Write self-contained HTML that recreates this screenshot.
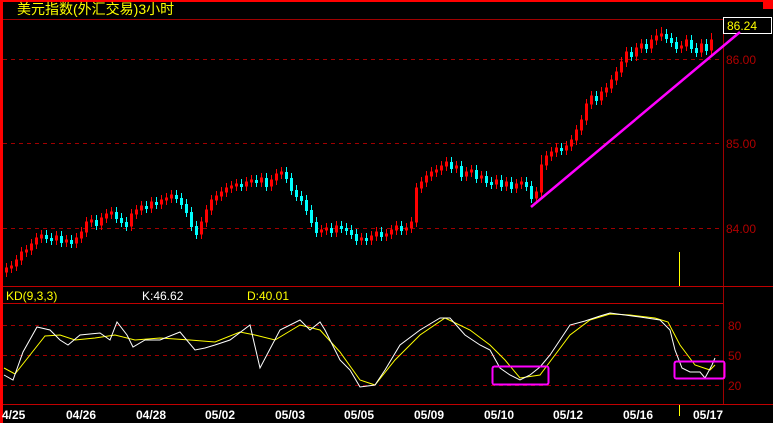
<!DOCTYPE html>
<html><head><meta charset="utf-8"><style>
html,body{margin:0;padding:0;background:#000;width:773px;height:423px;overflow:hidden}
svg{display:block}
text{font-family:"Liberation Sans","Noto Sans CJK SC",sans-serif}
</style></head><body>
<svg width="773" height="423" xmlns="http://www.w3.org/2000/svg" shape-rendering="crispEdges">
<rect width="773" height="423" fill="#000"/>
<rect x="0" y="0" width="773" height="2" fill="#f00"/>
<rect x="763" y="2" width="10" height="7" fill="#f00"/>
<rect x="0" y="0" width="3" height="423" fill="#f00"/>
<text x="17" y="14" font-size="14" fill="#ffff00" font-family="'Noto Sans CJK SC',sans-serif">美元指数(外汇交易)3小时</text>
<line x1="3" y1="19.5" x2="723" y2="19.5" stroke="#a00000"/>
<line x1="723.5" y1="19" x2="723.5" y2="405" stroke="#a00000"/>
<g stroke="#a00000" stroke-dasharray="4,4">
<line x1="3" y1="59.5" x2="723" y2="59.5"/>
<line x1="3" y1="143.5" x2="723" y2="143.5"/>
<line x1="3" y1="228.5" x2="723" y2="228.5"/>
<line x1="3" y1="325.5" x2="723" y2="325.5"/>
<line x1="3" y1="355.5" x2="723" y2="355.5"/>
<line x1="3" y1="385.5" x2="723" y2="385.5"/>
</g>
<line x1="3" y1="286.5" x2="773" y2="286.5" stroke="#c00000"/>
<line x1="3" y1="303.5" x2="723" y2="303.5" stroke="#c00000"/>
<line x1="3" y1="404.5" x2="773" y2="404.5" stroke="#c00000"/>
<g fill="#b00000" font-size="12">
<text x="726" y="64">86.00</text>
<text x="726" y="148">85.00</text>
<text x="726" y="233">84.00</text>
<text x="728" y="330">80</text>
<text x="728" y="360">50</text>
<text x="728" y="390">20</text>
</g>
<rect x="723.5" y="17.5" width="48" height="16" fill="#000" stroke="#fff"/>
<text x="727" y="30" font-size="12" fill="#ffff00">86.24</text>
<text x="6" y="300" font-size="12" fill="#ffff00">KD(9,3,3)</text>
<text x="142" y="300" font-size="12" fill="#fff">K:46.62</text>
<text x="247" y="300" font-size="12" fill="#ffff00">D:40.01</text>
<path fill="none" stroke="#ff0000" stroke-width="1" d="M6.5 263V277M5.5 268h2v4h-2z M11.5 261V273M10.5 266h2v2h-2z M16.5 255V271M15.5 260h2v6h-2z M21.5 247V265M20.5 252h2v8h-2z M26.5 245V257M25.5 250h2v2h-2z M31.5 239V255M30.5 244h2v6h-2z M36.5 233V249M35.5 238h2v6h-2z M41.5 230V243M40.5 235h2v3h-2z M56.5 231V245M55.5 236h2v4h-2z M66.5 235V247M65.5 240h2v2h-2z M76.5 233V248M75.5 238h2v5h-2z M81.5 227V243M80.5 232h2v6h-2z M86.5 217V237M85.5 222h2v10h-2z M91.5 215V227M90.5 220h2v2h-2z M101.5 213V230M100.5 218h2v7h-2z M106.5 209V223M105.5 214h2v4h-2z M111.5 207V219M110.5 212h2v2h-2z M131.5 209V231M130.5 214h2v12h-2z M136.5 205V219M135.5 210h2v4h-2z M141.5 201V215M140.5 206h2v4h-2z M151.5 197V213M150.5 202h2v6h-2z M161.5 195V209M160.5 200h2v4h-2z M166.5 193V205M165.5 198h2v2h-2z M171.5 190V203M170.5 195h2v3h-2z M201.5 217V239M200.5 222h2v12h-2z M206.5 205V227M205.5 210h2v12h-2z M211.5 195V215M210.5 200h2v10h-2z M216.5 191V205M215.5 196h2v4h-2z M221.5 187V201M220.5 192h2v4h-2z M226.5 183V197M225.5 188h2v4h-2z M231.5 181V193M230.5 186h2v2h-2z M236.5 179V191M235.5 184h2v2h-2z M246.5 177V191M245.5 182h2v4h-2z M251.5 175V187M250.5 180h2v2h-2z M261.5 173V187M260.5 178h2v4h-2z M271.5 175V191M270.5 180h2v6h-2z M276.5 169V185M275.5 174h2v6h-2z M281.5 167V179M280.5 172h2v2h-2z M321.5 225V237M320.5 230h2v2h-2z M326.5 223V235M325.5 228h2v2h-2z M336.5 221V237M335.5 226h2v6h-2z M361.5 233V245M360.5 238h2v2h-2z M371.5 231V245M370.5 236h2v4h-2z M376.5 227V241M375.5 232h2v4h-2z M386.5 229V241M385.5 234h2v2h-2z M391.5 225V239M390.5 230h2v4h-2z M396.5 221V235M395.5 226h2v4h-2z M406.5 223V235M405.5 228h2v2h-2z M411.5 217V233M410.5 222h2v6h-2z M416.5 183V227M415.5 188h2v34h-2z M421.5 177V193M420.5 182h2v6h-2z M426.5 171V187M425.5 176h2v6h-2z M431.5 167V181M430.5 172h2v4h-2z M436.5 165V177M435.5 170h2v2h-2z M441.5 161V175M440.5 166h2v4h-2z M446.5 157V171M445.5 162h2v4h-2z M456.5 161V173M455.5 166h2v2h-2z M466.5 167V181M465.5 172h2v4h-2z M471.5 165V177M470.5 170h2v2h-2z M481.5 171V183M480.5 176h2v2h-2z M496.5 175V189M495.5 180h2v4h-2z M506.5 177V191M505.5 182h2v4h-2z M516.5 179V193M515.5 184h2v4h-2z M521.5 177V189M520.5 182h2v2h-2z M536.5 187V203M535.5 192h2v6h-2z M541.5 155V197M540.5 165h2v27h-2z M546.5 151V170M545.5 156h2v9h-2z M551.5 147V161M550.5 152h2v4h-2z M556.5 143V157M555.5 148h2v4h-2z M566.5 141V155M565.5 146h2v4h-2z M571.5 135V151M570.5 140h2v6h-2z M576.5 125V145M575.5 130h2v10h-2z M581.5 115V135M580.5 120h2v10h-2z M586.5 99V125M585.5 104h2v16h-2z M591.5 91V109M590.5 96h2v8h-2z M601.5 87V105M600.5 92h2v8h-2z M606.5 83V97M605.5 88h2v4h-2z M611.5 75V93M610.5 80h2v8h-2z M616.5 67V85M615.5 72h2v8h-2z M621.5 57V77M620.5 62h2v10h-2z M626.5 47V67M625.5 52h2v10h-2z M636.5 43V61M635.5 48h2v8h-2z M641.5 39V53M640.5 44h2v4h-2z M651.5 35V53M650.5 40h2v8h-2z M656.5 29V45M655.5 36h2v4h-2z M661.5 27V41M660.5 34h2v2h-2z M681.5 41V53M680.5 46h2v2h-2z M686.5 35V51M685.5 40h2v6h-2z M701.5 39V57M700.5 44h2v8h-2z M711.5 33V55M710.5 40h2v10h-2z"/>
<path fill="none" stroke="#00ffff" stroke-width="1" d="M46.5 230V243M51.5 233V245M61.5 231V247M71.5 235V248M96.5 215V230M116.5 207V223M121.5 213V227M126.5 217V231M146.5 201V213M156.5 197V209M176.5 190V203M181.5 193V209M186.5 199V217M191.5 207V231M196.5 221V239M241.5 179V191M256.5 175V187M266.5 173V191M286.5 167V183M291.5 173V195M296.5 185V201M301.5 191V205M306.5 195V215M311.5 205V227M316.5 217V237M331.5 223V237M341.5 221V233M346.5 223V235M351.5 225V239M356.5 229V245M366.5 233V245M381.5 227V241M401.5 221V235M451.5 157V173M461.5 161V181M476.5 165V183M486.5 171V187M491.5 177V189M501.5 175V191M511.5 177V193M526.5 177V191M531.5 181V203M561.5 143V155M596.5 91V105M631.5 47V61M646.5 39V53M666.5 29V43M671.5 33V47M676.5 37V53M691.5 35V53M696.5 43V57M706.5 39V55"/>
<path fill="none" stroke="#00ffff" stroke-width="3" d="M46.5 235V239M51.5 238V241M61.5 236V243M71.5 240V244M96.5 220V226M116.5 212V219M121.5 218V223M126.5 222V227M146.5 206V209M156.5 202V205M176.5 195V199M181.5 198V205M186.5 204V213M191.5 212V227M196.5 226V235M241.5 184V187M256.5 180V183M266.5 178V187M286.5 172V179M291.5 178V191M296.5 190V197M301.5 196V201M306.5 200V211M311.5 210V223M316.5 222V233M331.5 228V233M341.5 226V229M346.5 228V231M351.5 230V235M356.5 234V241M366.5 238V241M381.5 232V237M401.5 226V231M451.5 162V169M461.5 166V177M476.5 170V179M486.5 176V183M491.5 182V185M501.5 180V187M511.5 182V189M526.5 182V187M531.5 186V199M561.5 148V151M596.5 96V101M631.5 52V57M646.5 44V49M666.5 34V39M671.5 38V43M676.5 42V49M691.5 40V49M696.5 48V53M706.5 44V51"/>
<line x1="679.5" y1="252" x2="679.5" y2="286" stroke="#ffff00"/>
<line x1="679.5" y1="405" x2="679.5" y2="416" stroke="#ffff00"/>
<polyline fill="none" stroke="#ffff00" stroke-width="1" shape-rendering="auto" points="4,368 15,374 30,355 45,336 60,335 75,340 95,338 115,335 135,340 160,338 190,340 215,342 240,332 255,335 275,340 300,325 320,330 340,352 360,380 375,385 395,360 420,335 445,318 470,330 490,345 505,360 520,378 540,375 555,355 570,335 590,320 610,314 630,315 655,318 668,322 680,345 695,365 710,370 715,365"/>
<polyline fill="none" stroke="#fff" stroke-width="1" shape-rendering="auto" points="4,375 13,380 23,352 37,327 50,330 60,340 68,345 80,335 100,333 110,340 117,322 127,335 133,347 145,340 160,340 180,332 195,350 205,348 215,345 230,340 250,325 260,368 280,330 300,320 310,330 320,322 325,330 340,360 350,370 360,387 375,385 385,370 400,345 420,330 440,318 450,318 465,335 480,345 490,350 500,368 510,375 520,380 530,375 540,367 550,355 560,340 570,325 585,321 600,316 610,313 625,315 640,317 660,320 670,330 675,350 682,368 690,372 700,372 705,378 712,365 715,358"/>
<line x1="531" y1="207" x2="740" y2="32" stroke="#ff00ff" stroke-width="2.5" shape-rendering="auto"/>
<rect x="492.5" y="366.5" width="56" height="18" rx="2" fill="none" stroke="#ff00ff" stroke-width="2"/>
<rect x="674.5" y="361.5" width="50" height="17" rx="2" fill="none" stroke="#ff00ff" stroke-width="2"/>
<g fill="#fff" font-size="12" font-weight="bold" font-family="'DejaVu Sans Mono','Liberation Mono',monospace">
<text x="2" y="419">4/25</text>
<text x="66" y="419">04/26</text>
<text x="136" y="419">04/28</text>
<text x="205" y="419">05/02</text>
<text x="275" y="419">05/03</text>
<text x="344" y="419">05/05</text>
<text x="414" y="419">05/09</text>
<text x="484" y="419">05/10</text>
<text x="553" y="419">05/12</text>
<text x="623" y="419">05/16</text>
<text x="693" y="419">05/17</text>
</g>
</svg>
</body></html>
